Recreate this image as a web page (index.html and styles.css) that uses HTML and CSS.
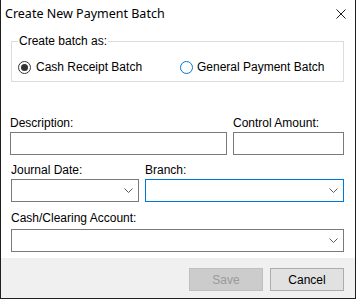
FILE: index.html
```html
<!DOCTYPE html>
<html lang="en">
<head>
  <meta charset="UTF-8">
  <title>Create New Payment Batch</title>
  <link rel="stylesheet" href="styles.css">
</head>
<body>

<div class="window">
  <!-- Title bar -->
  <div class="titlebar">
    <span class="title">Create New Payment Batch</span>
    <svg class="close" width="10" height="10" viewBox="0 0 10 10">
      <path d="M0.5 0.5 L9.5 9.5 M9.5 0.5 L0.5 9.5" stroke="#1a1a1a" stroke-width="1" fill="none"/>
    </svg>
  </div>

  <div class="main">
    <fieldset class="group">
      <legend>Create batch as:</legend>
      <div class="radios">
        <label class="radio"><span class="dot checked"></span>Cash Receipt Batch</label>
        <label class="radio"><span class="dot focus"></span>General Payment Batch</label>
      </div>
    </fieldset>

    <div class="row row-desc">
      <div class="field">
        <div class="lbl">Description:</div>
        <div class="input"></div>
      </div>
      <div class="field">
        <div class="lbl">Control Amount:</div>
        <div class="input"></div>
      </div>
    </div>

    <div class="row row-date">
      <div class="field">
        <div class="lbl">Journal Date:</div>
        <div class="input combo"><svg width="9" height="5" viewBox="0 0 9 5"><path d="M0.5 0.5 L4.5 4.5 L8.5 0.5" stroke="#5a5a5a" fill="none"/></svg></div>
      </div>
      <div class="field">
        <div class="lbl">Branch:</div>
        <div class="input combo active"><svg width="9" height="5" viewBox="0 0 9 5"><path d="M0.5 0.5 L4.5 4.5 L8.5 0.5" stroke="#5a5a5a" fill="none"/></svg></div>
      </div>
    </div>

    <div class="row row-acct">
      <div class="field">
        <div class="lbl">Cash/Clearing Account:</div>
        <div class="input combo"><svg width="9" height="5" viewBox="0 0 9 5"><path d="M0.5 0.5 L4.5 4.5 L8.5 0.5" stroke="#5a5a5a" fill="none"/></svg></div>
      </div>
    </div>
  </div>

  <div class="footer">
    <button class="btn disabled">Save</button>
    <button class="btn">Cancel</button>
  </div>
</div>

</body>
</html>
```

FILE: styles.css
```css
* { margin: 0; padding: 0; box-sizing: border-box; }

html, body {
  background: #fff;
  font-family: "Liberation Sans", Arial, sans-serif;
  font-size: 12px;
  color: #000;
}

.window {
  width: 356px;
  height: 299px;
  border: 1px solid #1f1f1f;
  border-top: none;
  display: flex;
  flex-direction: column;
  background: #fff;
}

.titlebar {
  height: 30px;
  display: flex;
  align-items: center;
  justify-content: space-between;
  padding: 0 9px 0 4px;
}

.title {
  font-family: "Noto Sans", sans-serif;
  font-size: 12.5px;
  color: #000;
  margin-top: -4px;
}

.close { margin-top: -3px; }

.main {
  flex: 1;
  padding: 0 11px 0 9px;
}

.group {
  margin: 4px 0 0 1px;
  border: 1px solid #dcdcdc;
  padding: 12px 6px 7px 6px;
}

.group legend {
  margin-left: 0;
  padding: 0 1px;
  line-height: 14px;
}

.radios {
  display: grid;
  grid-template-columns: 162px auto;
  line-height: 14px;
}

.radio {
  display: flex;
  align-items: center;
}

.dot {
  width: 13px;
  height: 13px;
  border: 1px solid #333;
  border-radius: 50%;
  margin-right: 5px;
  display: flex;
  align-items: center;
  justify-content: center;
  background: #fff;
}

.radio + .radio .dot { margin-right: 4px; }

.dot.checked::after {
  content: "";
  width: 7px;
  height: 7px;
  border-radius: 50%;
  background: #333;
}

.dot.focus { border-color: #0078d7; }

.row {
  display: grid;
  gap: 6px;
}

.row-desc { margin-top: 34px; grid-template-columns: 1fr 111px; }
.row-date { margin-top: 8px; grid-template-columns: 128px 1fr; margin-left: 1px; }
.row-acct { margin-top: 9px; margin-left: 1px; }

.lbl {
  line-height: 14px;
  margin-bottom: 2px;
}

.row-acct .lbl { margin-bottom: 4px; }

.input {
  height: 23px;
  border: 1px solid #7a7a7a;
  background: #fff;
}

.combo {
  display: flex;
  align-items: center;
  justify-content: flex-end;
  padding-right: 5px;
}

.combo.active { border-color: #0078d7; }

.footer {
  height: 40px;
  background: #f0f0f0;
  display: flex;
  justify-content: flex-end;
  gap: 7px;
  padding: 10px 11px 0 0;
}

.btn {
  width: 74px;
  height: 23px;
  background: #e1e1e1;
  border: 1px solid #adadad;
  font-family: "Liberation Sans", Arial, sans-serif;
  font-size: 12px;
  color: #000;
}

.btn.disabled {
  background: #cccccc;
  border-color: #bfbfbf;
  color: #9a9a9a;
}
```
